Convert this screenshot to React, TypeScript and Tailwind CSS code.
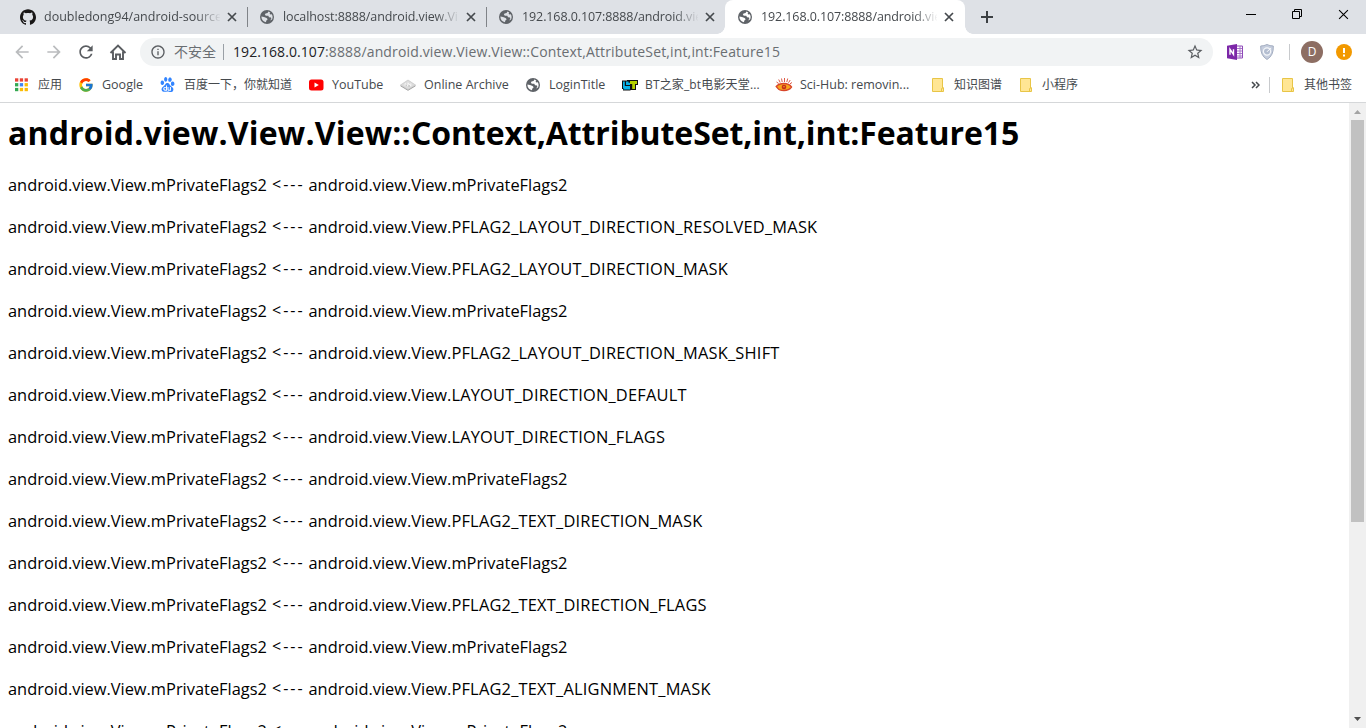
import type { ReactNode } from "react";
import { MdArrowBack, MdArrowForward, MdRefresh, MdInfoOutline, MdStarBorder } from "react-icons/md";
import { FcGoogle } from "react-icons/fc";
import { SiBaidu, SiGithub } from "react-icons/si";

function Globe() {
  return (
    <svg viewBox="0 0 16 16" className="size-4 shrink-0">
      <path
        fillRule="evenodd"
        fill="#5f6368"
        d="M8 1a7 7 0 1 1 0 14A7 7 0 0 1 8 1zM9.300 2.600 8.600 4 6.500 4.600 5.800 6.100 7.300 6.800 9.300 6.700 10 8.200 12 8.400 12.300 9.700 11.100 11.600 13 10.600C14 8.600 13.700 6.600 12.800 5.200L11.400 5.600 10.600 4.600 11.300 3.500zM2.400 7.600 5 8 7.600 9 8.700 10.300 7.400 11.600 6.900 13.300C4.200 12.900 2.300 10.500 2.400 7.600z"
      />
    </svg>
  );
}

function Folder() {
  return (
    <svg viewBox="0 0 14 16" className="h-4 w-3.5 shrink-0">
      <path d="M.5 1.500h10v9.500h1v3.500H.5z" fill="#ffe694" stroke="#e8c547" />
      <path d="M9.500 14.500v-3l2-1" fill="none" stroke="#e8c547" />
    </svg>
  );
}

function Apps() {
  const colors = ["#ea4335", "#ea4335", "#ea4335", "#34a853", "#4285f4", "#fbbc05", "#34a853", "#fbbc05", "#fbbc05"];
  return (
    <svg viewBox="0 0 14 14" className="size-3.5 shrink-0">
      {colors.map((c, i) => (
        <rect key={i} x={1 + (i % 3) * 4.800} y={0.3 + Math.floor(i / 3) * 4.800} width="3.300" height="3.300" fill={c} />
      ))}
    </svg>
  );
}

function YouTube() {
  return (
    <svg viewBox="0 0 16 16" className="size-4 shrink-0">
      <rect x="1" y="2.500" width="14.500" height="11" rx="2.500" fill="#f00" />
      <path d="M6.500 5.500v5l4.300-2.500z" fill="#fff" />
    </svg>
  );
}

function Archive() {
  return (
    <svg viewBox="0 0 16 16" className="size-4 shrink-0">
      <path d="M.5 8 8 3l7.500 5L8 12.500z" fill="#dcdcdc" stroke="#c4c4c4" strokeWidth=".7" />
      <path d="M.5 8.800 8 13.300l7.500-4.500" fill="none" stroke="#a2a2a2" />
      <path d="M5.200 9V6.500L8 9.200V5.800l2.800 3.400V6.500" fill="none" stroke="#f8f8f8" />
      <path d="M6.200 9V7.500M9 9.800V8" fill="none" stroke="#aaa" strokeWidth=".7" />
    </svg>
  );
}

function BtHome() {
  return (
    <svg viewBox="0 0 16 16" className="size-4 shrink-0">
      <path d="M0 3.500h5V3h11v5h-2v5H8.500v.5H1V12H0z" fill="#111" />
      <path d="M1 4.500h1.800V9H8v3.500H1.500V11H1z" fill="#08b2e8" />
      <path d="M4 4.500h2.500v1.200H8V8H4z" fill="#08b2e8" />
      <path d="M8 4h7v3h-2v5h-2.800V7H8z" fill="#b4d000" />
    </svg>
  );
}

function SciHub() {
  return (
    <svg viewBox="0 0 18 16" className="-ml-px h-4 w-[18px] shrink-0">
      <path d="M1.200 9.500Q4 6.500 9 6.500t7.500 3.500Q14 13.500 9 13.500T3 11.500z" fill="#f7a51c" stroke="#d8452a" strokeWidth="1.300" />
      <circle cx="9" cy="10" r="2.300" fill="#c62b1b" />
      <circle cx="9" cy="9.700" r=".8" fill="#f7a51c" />
      <path d="m1.500 5 2.200 1.500M3.700 2.500l1.500 3M6.500 1.500l.7 3.500M9.500 1v4M12.700 1.500 11.800 5M15.200 3l-1.700 2.800M17 5.500l-2 1.300" stroke="#dd5b48" strokeWidth="1" />
    </svg>
  );
}

function Home() {
  return (
    <svg viewBox="0 0 18 18" className="size-[18px] shrink-0">
      <path d="M1.500 10 9 2.500l7.500 7.500M4 8.500V16h3v-4.500h4V16h3V8.500" fill="none" stroke="#5a5d61" strokeWidth="1.900" />
    </svg>
  );
}

function OneNote() {
  return (
    <svg viewBox="0 0 16 16" className="size-4 shrink-0">
      <path d="M10 2h5.500v12H10" fill="#fff" stroke="#8e4bb8" />
      <path d="M10 4.500h5M10 7h5M10 9.500h5M10 12h5M13 2v12" stroke="#a269c6" strokeWidth=".9" />
      <path d="M0 1.800 10 0v16L0 14.200z" fill="#7c27a8" />
      <path d="M3 10.800V5.300l3.500 5.200V5.200" fill="none" stroke="#fff" strokeWidth="1.400" />
    </svg>
  );
}

function Shield() {
  return (
    <svg viewBox="0 0 14 16" className="h-4 w-3.5 shrink-0">
      <path d="M7 .5Q10 2 13.300 2q.5 9.500-6.300 13.500Q.2 11.500.7 2 4 2 7 .5z" fill="#c5cddd" stroke="#a3adc0" />
      <circle cx="7" cy="7.500" r="3.600" fill="#b4bed1" stroke="#f5f7fa" strokeWidth="1.200" />
      <path d="m7 7.800 3.800-3.800" stroke="#fff" />
    </svg>
  );
}

function Cross({ className }: { className: string }) {
  return (
    <svg viewBox="0 0 10 10" className={className} stroke="currentColor">
      <path d="m1 1 8 8M9 1 1 9" />
    </svg>
  );
}

const tabs = [
  { title: "doubledong94/android-source", spacing: "tracking-[0px]", icon: <SiGithub className="size-4 shrink-0 text-[#191717]" /> },
  { title: "localhost:8888/android.view.Vi", spacing: "tracking-[-0.1px]", icon: <Globe /> },
  { title: "192.168.0.107:8888/android.vie", spacing: "tracking-[-0.1px]", icon: <Globe /> },
  { title: "192.168.0.107:8888/android.vie", spacing: "tracking-[-0.1px]", icon: <Globe />, active: true },
];

function TabStrip() {
  return (
    <div className="flex h-[34px] shrink-0 bg-[#dee1e6] pl-2">
      {tabs.map((t, i) => (
        <div
          key={i}
          className={`relative flex shrink-0 items-center pl-3 ${t.active ? "w-[240px] rounded-t-lg bg-white" : "w-[239px]"}`}
        >
          {t.icon}
          <span
            className={`ml-2 w-[176px] overflow-hidden whitespace-nowrap text-[12.5px] leading-4 text-[#45494d] [mask-image:linear-gradient(to_right,black_152px,transparent_177px)] ${t.spacing}`}
          >
            {t.title}
          </span>
          <Cross className="ml-[7px] size-[10px] shrink-0 stroke-[1.7] text-[#45494d]" />
          {i < 2 && <span className="absolute top-[7px] -right-px h-5 w-px bg-[#808388]" />}
          {t.active && (
            <>
              <span className="absolute bottom-0 -left-2 size-2 bg-[radial-gradient(circle_at_0_0,#dee1e6_7.5px,white_8px)]" />
              <span className="absolute -right-2 bottom-0 size-2 bg-[radial-gradient(circle_at_100%_0,#dee1e6_7.5px,white_8px)]" />
            </>
          )}
        </div>
      ))}
      <svg viewBox="0 0 12 12" className="mt-[11px] ml-4 size-3 shrink-0">
        <path d="M6 0v12M0 6h12" stroke="#3c4043" strokeWidth="2" />
      </svg>
      <div className="mt-[9px] mr-[17px] ml-auto flex h-[11px] gap-9 text-black">
        <svg viewBox="0 0 10 10" className="size-[10px]">
          <path d="M0 5.500h10" stroke="black" />
        </svg>
        <svg viewBox="0 0 10 10" className="size-[10px]" fill="none" stroke="black">
          <path d="M.5 2.500h7v7h-7zM2.500 2.500v-2h7v7h-2" />
        </svg>
        <Cross className="size-[11px] stroke-1" />
      </div>
    </div>
  );
}

function Toolbar() {
  return (
    <div className="flex h-9 shrink-0 items-center bg-white pl-3 text-[#5a5d61]">
      <MdArrowBack className="size-5 text-[#babcbe]" />
      <MdArrowForward className="ml-3 size-5 text-[#babcbe]" />
      <MdRefresh className="ml-3 size-5" />
      <div className="ml-[13px]">
        <Home />
      </div>
      <div className="ml-[13px] flex h-7 w-[1073px] items-center rounded-full bg-[#f1f3f4] pl-[10px]">
        <MdInfoOutline className="size-4" />
        <span className="ml-2 w-[42px] whitespace-nowrap text-[14px] leading-5 text-[#6a6e72]">不安全</span>
        <span className="ml-[7px] h-4 w-px bg-[#9aa0a6]" />
        <span className="ml-[9px] whitespace-nowrap text-[14px] leading-5 tracking-[0.145px] text-[#6a6e72]">
          <span className="tracking-[0.07px] text-[#202124]">192.168.0.107</span>
          :8888/android.view.View.View::Context,AttributeSet,int,int:Feature15
        </span>
        <MdStarBorder className="mr-[9px] ml-auto size-[18px]" />
      </div>
      <div className="ml-[14px] flex items-center">
        <OneNote />
        <div className="ml-[17px]">
          <Shield />
        </div>
        <span className="ml-[15px] h-4 w-px bg-[#c8cacd]" />
        <span className="ml-[11px] flex size-[22px] items-center justify-center rounded-full bg-[#8d6e63] text-[12px] text-white">
          D
        </span>
        <svg viewBox="0 0 16 16" className="ml-[13px] size-4">
          <circle cx="8" cy="8" r="8" fill="#f29900" />
          <path d="M8 4v5M8 10.500v2" stroke="white" strokeWidth="2" />
        </svg>
      </div>
    </div>
  );
}

function Bookmark({ icon, label, box, text }: { icon: ReactNode; label: string; box: string; text: string }) {
  return (
    <div className={`flex shrink-0 items-center ${box}`}>
      <span className="flex w-6 shrink-0 items-center">{icon}</span>
      <span className={`whitespace-nowrap leading-4 ${text}`}>{label}</span>
    </div>
  );
}

function BookmarkBar() {
  return (
    <div className="flex h-[33px] shrink-0 items-center border-b border-[#d5d7d9] bg-white pb-[3px] pl-[14px] text-[#45494d]">
      <Bookmark icon={<Apps />} label="应用" box="w-[64px]" text="text-[12px]" />
      <Bookmark icon={<FcGoogle className="size-4" />} label="Google" box="w-[82px]" text="text-[12.5px]" />
      <Bookmark icon={<SiBaidu className="size-[15px] text-[#3385ff]" />} label="百度一下，你就知道" box="w-[148px]" text="text-[12px]" />
      <Bookmark icon={<YouTube />} label="YouTube" box="w-[92px]" text="text-[12.5px]" />
      <Bookmark icon={<Archive />} label="Online Archive" box="w-[125px]" text="text-[12.5px]" />
      <Bookmark icon={<Globe />} label="LoginTitle" box="w-[97px]" text="text-[12.5px]" />
      <Bookmark icon={<BtHome />} label="BT之家_bt电影天堂..." box="w-[154px]" text="-ml-px text-[12px] tracking-[0.15px]" />
      <Bookmark icon={<SciHub />} label="Sci-Hub: removin..." box="w-[156px]" text="text-[12.5px]" />
      <Bookmark icon={<Folder />} label="知识图谱" box="w-[88px]" text="-ml-[2px] text-[12px]" />
      <Bookmark icon={<Folder />} label="小程序" box="w-[70px]" text="-ml-[2px] text-[12px]" />
      <div className="mr-[14px] ml-auto flex items-center">
        <svg viewBox="0 0 9 8" className="mr-[9px] h-2 w-[9px]" fill="none" stroke="#45494d" strokeWidth="1.500">
          <path d="m1 1 3 3-3 3M5 1l3 3-3 3" />
        </svg>
        <span className="mr-3 h-4 w-px bg-[#c8cacd]" />
        <Folder />
        <span className="ml-2 whitespace-nowrap text-[12px] leading-4">其他书签</span>
      </div>
    </div>
  );
}

const fields = [
  "mPrivateFlags2",
  "PFLAG2_LAYOUT_DIRECTION_RESOLVED_MASK",
  "PFLAG2_LAYOUT_DIRECTION_MASK",
  "mPrivateFlags2",
  "PFLAG2_LAYOUT_DIRECTION_MASK_SHIFT",
  "LAYOUT_DIRECTION_DEFAULT",
  "LAYOUT_DIRECTION_FLAGS",
  "mPrivateFlags2",
  "PFLAG2_TEXT_DIRECTION_MASK",
  "mPrivateFlags2",
  "PFLAG2_TEXT_DIRECTION_FLAGS",
  "mPrivateFlags2",
  "PFLAG2_TEXT_ALIGNMENT_MASK",
  "mPrivateFlags2",
];

function Page() {
  return (
    <div className="flex min-h-0 flex-1 bg-white text-black">
      <main className="min-w-0 flex-1 overflow-hidden pl-2">
        <h1 className="mt-[9px] text-[32px] leading-[42px] font-bold whitespace-nowrap">
          <span className="tracking-[0.18px]">android.view.View.View::</span>
          <span className="tracking-[-0.09px]">Context,AttributeSet,int,int:Feature15</span>
        </h1>
        <div className="mt-5">
          {fields.map((f, i) => (
            <p key={i} className="mb-[21px] flex text-[16.4px] leading-[21px] whitespace-nowrap">
              <span className="w-[264px]">android.view.View.mPrivateFlags2</span>
              <span className="w-[36.5px] text-[16px] tracking-[2px]">&lt;---</span>
              <span>android.view.View.</span>
              <span className={f === "mPrivateFlags2" ? "" : "tracking-[0.21px]"}>{f}</span>
            </p>
          ))}
        </div>
      </main>
      <div className="flex w-[17px] flex-col items-center bg-[#f0f0f0]">
        <svg viewBox="0 0 17 17" className="size-[17px] shrink-0">
          <path d="M5 11h7L8.500 7z" fill="#a3a3a3" />
        </svg>
        <div className="h-[402px] w-[13px] bg-[#c1c1c1]" />
        <svg viewBox="0 0 17 17" className="mt-auto size-[17px] shrink-0">
          <path d="M5 6h7l-3.500 4z" fill="#505050" />
        </svg>
      </div>
    </div>
  );
}

export default function App() {
  return (
    <div className="flex h-[728px] w-[1366px] flex-col overflow-hidden bg-white font-['Open_Sans','Noto_Sans_CJK_SC',sans-serif]">
      <TabStrip />
      <Toolbar />
      <BookmarkBar />
      <Page />
    </div>
  );
}
